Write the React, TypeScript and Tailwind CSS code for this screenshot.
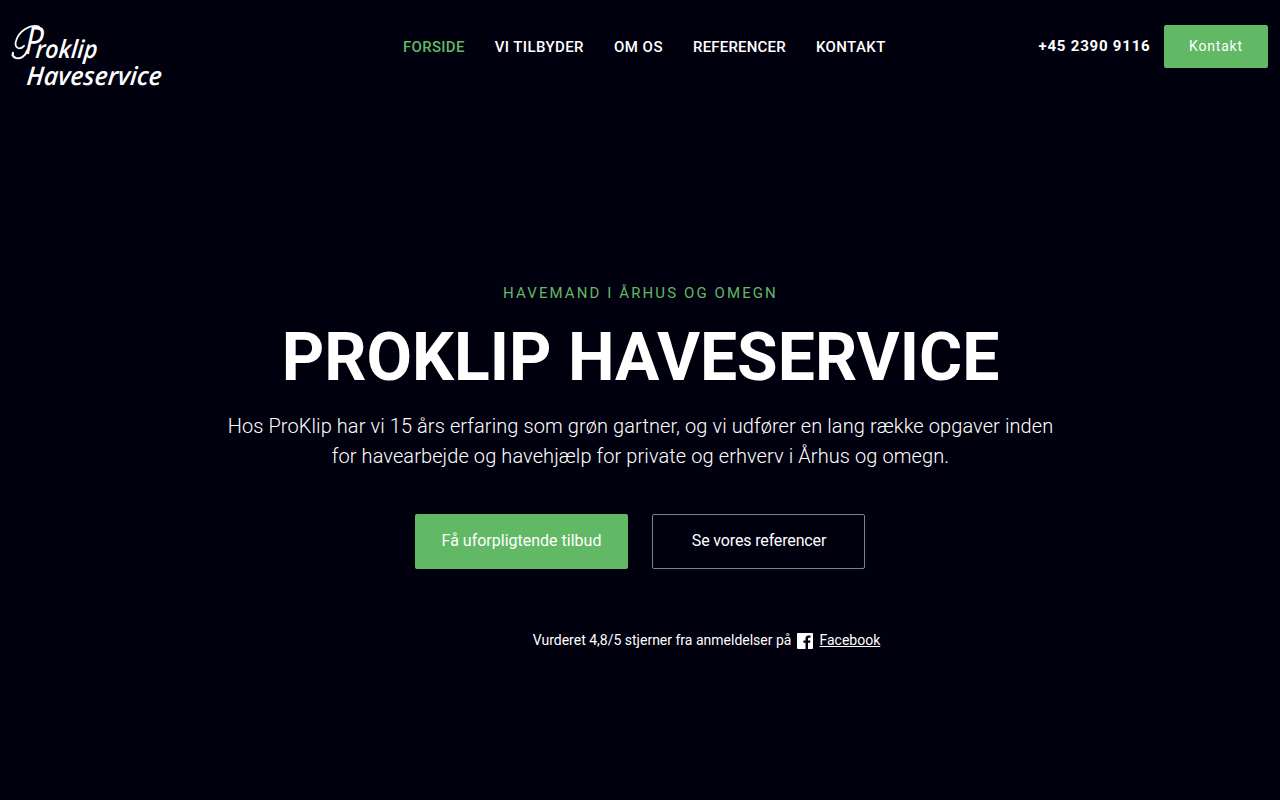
interface NavItem {
  label: string
  className: string
}

const NAV_ITEMS: NavItem[] = [
  { label: 'FORSIDE', className: 'text-[#61b865] tracking-[0.3px]' },
  { label: 'VI TILBYDER', className: 'tracking-[0.4px]' },
  { label: 'OM OS', className: 'tracking-[0.5px]' },
  { label: 'REFERENCER', className: 'tracking-[0.2px]' },
  { label: 'KONTAKT', className: 'tracking-[0.4px]' },
]

function Logo() {
  return (
    <svg width="152" height="64" viewBox="0 0 152 64" fill="white" className="overflow-visible">
      {/* swashes around the initial */}
      <g fill="none" stroke="white" strokeLinecap="round">
        <path d="M12 21C7 26 2 22 4 16C7 6 18 -1 27 1.5" strokeWidth="1.8" />
        <path d="M15 26C13 32 8 34 4 33C1 32 0 30 1 28" strokeWidth="2.2" />
      </g>
      <g fontFamily="'Open Sans', sans-serif" fontStyle="italic" fontWeight="600">
        <text
          transform="translate(12.5 29) skewX(-7)"
          fontSize="38"
          fontFamily="Lato, sans-serif"
          fontWeight="400"
          textLength="17"
          lengthAdjust="spacingAndGlyphs"
        >
          P
        </text>
        <text transform="translate(23 32.5) skewX(-5)" fontSize="25" textLength="62" lengthAdjust="spacingAndGlyphs">
          roklip
        </text>
        <text transform="translate(14 59.5) skewX(-5)" fontSize="25.5" textLength="135" lengthAdjust="spacingAndGlyphs">
          Haveservice
        </text>
      </g>
    </svg>
  )
}

function FacebookIcon() {
  return (
    <svg width="16" height="16" viewBox="0 0 16 16" fill="white" className="mt-0.5">
      <path d="M1 0H15A1 1 0 0 1 16 1V15A1 1 0 0 1 15 16H11V9.8H13.1L13.4 7.4H11V5.9C11 5.2 11.2 4.7 12.2 4.7H13.5V2.5C13.3 2.5 12.5 2.4 11.7 2.4C9.8 2.4 8.5 3.5 8.5 5.6V7.4H6.4V9.8H8.5V16H1A1 1 0 0 1 0 15V1A1 1 0 0 1 1 0Z" />
    </svg>
  )
}

function Header() {
  return (
    <header className="grid h-[92px] grid-cols-[391px_auto_1fr] items-start px-3 pt-[25px]">
      <a href="#">
        <Logo />
      </a>
      <nav className="flex gap-[30px] pt-[10px] text-[15px] leading-6 font-medium">
        {NAV_ITEMS.map(({ label, className }) => (
          <a key={label} href="#" className={className}>
            {label}
          </a>
        ))}
      </nav>
      <div className="flex items-center justify-end gap-[13.5px]">
        <a href="#" className="text-[15px] font-bold tracking-[0.8px]">+45 2390 9116</a>
        <a
          href="#"
          className="flex h-[43px] w-[104px] items-center justify-center rounded-xs bg-[#61b865] pb-0.5 text-sm tracking-[0.8px]"
        >
          Kontakt
        </a>
      </div>
    </header>
  )
}

function Hero() {
  return (
    <main className="flex flex-col items-center pt-[189px] text-center">
      <p className="pl-px text-[15px] leading-6 tracking-[2.1px] text-[#61b865]">HAVEMAND I ÅRHUS OG OMEGN</p>
      <h1 className="mt-[13px] pl-px text-[66px] leading-[79px] font-bold">PROKLIP HAVESERVICE</h1>
      <p className="mt-3.5 pl-px text-xl leading-[30px] font-light tracking-[0.09px]">
        Hos ProKlip har vi 15 års erfaring som grøn gartner, og vi udfører en lang række opgaver inden
        <br />
        for havearbejde og havehjælp for private og erhverv i Århus og omegn.
      </p>
      <div className="mt-[43px] flex gap-6">
        <a href="#" className="flex h-[55px] w-[213px] items-center justify-center rounded-xs bg-[#61b865] pb-0.5">
          Få uforpligtende tilbud
        </a>
        <a
          href="#"
          className="flex h-[55px] w-[213px] items-center justify-center rounded-xs border border-[#808086] pb-0.5 pl-px tracking-[-0.15px]"
        >
          Se vores referencer
        </a>
      </div>
      <div className="mt-[61px] ml-[133px] flex items-center gap-1.5 text-sm">
        <span>Vurderet 4,8/5 stjerner fra anmeldelser på</span>
        <FacebookIcon />
        <a href="#" className="underline">Facebook</a>
      </div>
    </main>
  )
}

export default function App() {
  return (
    <div className="h-screen overflow-hidden bg-[#01000e] font-[Roboto,sans-serif] text-white">
      <Header />
      <Hero />
    </div>
  )
}
